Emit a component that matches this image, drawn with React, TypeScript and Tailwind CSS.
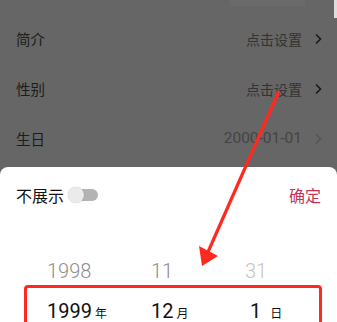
import React from "react";

const rows = [
  { label: "简介", value: "点击设置", valueCls: "text-[14px] text-[#333]", chevCls: "text-[#1a1a1a]" },
  { label: "性别", value: "点击设置", valueCls: "text-[14px] text-[#333]", chevCls: "text-[#1a1a1a]" },
  { label: "生日", value: "2000-01-01", valueCls: "text-[15.5px] text-[#444] font-['Roboto',sans-serif]", chevCls: "text-[#555]" },
];

const Chevron = ({ className }: { className: string }) => (
  <svg width="8" height="12" viewBox="0 0 8 12" className={className}>
    <path d="M2 1.5 L6.5 6 L2 10.5" fill="none" stroke="currentColor" strokeWidth="1.6" />
  </svg>
);

export default function App() {
  return (
    <div className="relative w-[337px] h-[322px] overflow-hidden bg-[#666] font-['Noto_Sans_CJK_SC',sans-serif]">
      {/* faint top band + scrollbar */}
      <div className="absolute left-[230px] top-0 w-[75px] h-[6px] bg-[#6a6a6a]" />
      <div className="absolute right-0 top-0 w-[3px] h-[18px] bg-[#ddd]" />

      {/* settings rows (dimmed by overlay) */}
      <div className="flex flex-col pt-[14px]">
        {rows.map((r) => (
          <div key={r.label} className="flex items-center justify-between h-[50px] pl-4 pr-[15px]">
            <span className="text-[14.5px] text-[#1c1c1c]">{r.label}</span>
            <div className="flex items-center gap-[12px]">
              <span className={r.valueCls}>{r.value}</span>
              <Chevron className={r.chevCls} />
            </div>
          </div>
        ))}
      </div>

      {/* bottom sheet */}
      <div className="absolute left-0 right-0 top-[167px] bottom-0 bg-white rounded-t-[8px]">
        <div className="flex items-center justify-between h-[54px] pl-4 pr-4 pt-[2px]">
          <div className="flex items-center gap-[4px]">
            <span className="text-[16px] text-[#111]">不展示</span>
            <div className="relative w-[30px] h-[16px]">
              <div className="absolute right-0 top-[2px] w-[22px] h-[12px] rounded-full bg-[#b3b3b3]" />
              <div className="absolute left-0 top-0 w-[16px] h-[16px] rounded-full bg-[#ebebeb] shadow-[0_0_1px_rgba(0,0,0,0.3)]" />
            </div>
          </div>
          <span className="text-[16px] text-[#c73452]">确定</span>
        </div>

        <div className="flex pl-[47px] pt-[35px] font-['Roboto',sans-serif] text-[20px] leading-[30px] font-light">
          <span className="w-[104px] text-[#8c8c8c]">1998</span>
          <span className="w-[94px] text-[#8c8c8c]">11</span>
          <span className="text-[#c4c4c4]">31</span>
        </div>
        <div className="flex pl-[47px] pt-[10px] font-['Roboto',sans-serif] text-[20px] leading-[30px] text-[#111]">
          <span className="w-[104px] flex items-baseline gap-[3px]">
            1999<span className="text-[12px] font-['Noto_Sans_CJK_SC',sans-serif]">年</span>
          </span>
          <span className="w-[99px] flex items-baseline gap-[3px]">
            12<span className="text-[12px] font-['Noto_Sans_CJK_SC',sans-serif]">月</span>
          </span>
          <span className="flex items-baseline gap-[9px]">
            1<span className="text-[12px] font-['Noto_Sans_CJK_SC',sans-serif]">日</span>
          </span>
        </div>
      </div>

      {/* red annotation box */}
      <div className="absolute left-[24px] top-[285px] w-[298px] h-[60px] border-[3px] border-[#ff2a1f] rounded-[4px]" />

      {/* red annotation arrow */}
      <svg className="absolute inset-0" width="337" height="322" viewBox="0 0 337 322">
        <line x1="279" y1="91" x2="208" y2="252" stroke="#ff2a1f" strokeWidth="3.2" />
        <polygon points="202,266 199,246 218,256" fill="#ff2a1f" />
      </svg>
    </div>
  );
}
